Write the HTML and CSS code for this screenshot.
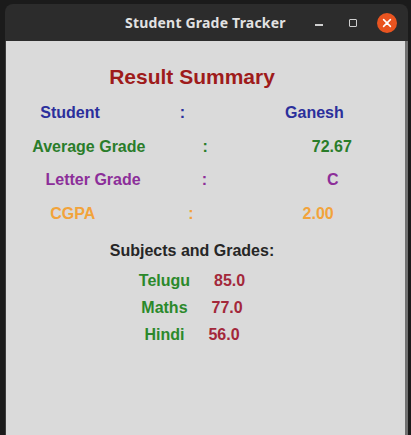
FILE: index.html
```html
<!DOCTYPE html>
<html lang="en">
<head>
<meta charset="utf-8">
<title>Student Grade Tracker</title>
<link rel="stylesheet" href="styles.css">
</head>
<body>
<div class="window">
  <header class="titlebar">
    <div class="title">Student Grade Tracker</div>
    <div class="controls">
      <span class="btn btn-min"></span>
      <span class="btn btn-max"></span>
      <span class="btn btn-close">
        <svg width="20" height="20" viewBox="0 0 20 20"><circle cx="10" cy="10" r="10" fill="#e95420"/><path d="M6.6 6.6 L13.4 13.4 M13.4 6.6 L6.6 13.4" stroke="#ffffff" stroke-width="1.6" stroke-linecap="round"/></svg>
      </span>
    </div>
  </header>
  <main class="content">
    <h1 class="heading">Result Summary</h1>
    <div class="row row-student"><span class="lbl">Student</span><span class="colon">:</span><span class="val">Ganesh</span></div>
    <div class="row row-avg"><span class="lbl">Average Grade</span><span class="colon">:</span><span class="val">72.67</span></div>
    <div class="row row-letter"><span class="lbl">Letter Grade</span><span class="colon">:</span><span class="val">C</span></div>
    <div class="row row-cgpa"><span class="lbl">CGPA</span><span class="colon">:</span><span class="val">2.00</span></div>
    <h2 class="subhead">Subjects and Grades:</h2>
    <div class="subj"><span class="sname">Telugu</span><span class="sgrade">85.0</span></div>
    <div class="subj"><span class="sname">Maths</span><span class="sgrade">77.0</span></div>
    <div class="subj"><span class="sname">Hindi</span><span class="sgrade">56.0</span></div>
  </main>
</div>
</body>
</html>
```
FILE: styles.css
```css
html, body {
  margin: 0;
  padding: 0;
  height: 100%;
  overflow: hidden;
}
body {
  background: #1b1b1b;
  font-family: "Liberation Sans", Arial, sans-serif;
}
.window {
  margin: 4px 0 0 5px;
  width: 403px;
  height: 440px;
  border-radius: 8px 8px 0 0;
  overflow: hidden;
  display: flex;
  flex-direction: column;
}
.titlebar {
  height: 37px;
  flex: none;
  background: #2c2c2c;
  display: flex;
  align-items: center;
  position: relative;
}
.title {
  font-family: "Noto Sans", "DejaVu Sans", sans-serif;
  font-weight: 700;
  font-size: 14px;
  color: #e2e2e2;
  margin-left: 120px;
  letter-spacing: 0.2px;
}
.controls {
  margin-left: auto;
  display: flex;
  align-items: center;
  margin-right: 11px;
}
.btn {
  display: block;
}
.btn-min {
  width: 8px;
  height: 2px;
  background: #cfcfcf;
  margin-top: 5px;
  margin-right: 26px;
}
.btn-max {
  width: 6px;
  height: 6px;
  border: 1.5px solid #cfcfcf;
  border-radius: 1px;
  margin-right: 20px;
}
.btn-close {
  width: 20px;
  height: 20px;
}
.btn-close svg { display: block; }

.content {
  flex: 1;
  background: #dadada;
  border-left: 1px solid #3c3c3c;
  border-right: 3px solid #707070;
  padding: 22px 27px 0 0;
  display: flex;
  flex-direction: column;
  align-items: center;
  font-weight: 700;
  font-size: 16px;
}
.heading {
  margin: 0 0 5px 0;
  font-size: 21px;
  line-height: 28px;
  color: #9e1b1b;
  font-weight: 700;
}
.row {
  display: flex;
  line-height: 33.5px;
  height: 33.5px;
  white-space: nowrap;
}
.row-student { color: #2b2f9c; }
.row-student .colon { margin: 0 100px 0 80px; }
.row-avg { color: #2a7d2a; }
.row-avg .colon { margin: 0 104px 0 57px; }
.row-letter { color: #8c2e99; }
.row-letter .colon { margin: 0 120px 0 61px; }
.row-cgpa { color: #f2a33a; }
.row-cgpa .colon { margin: 0 109px 0 93px; }
.subhead {
  margin: 9px 0 4px 0;
  font-size: 16px;
  line-height: 24px;
  color: #262626;
  font-weight: 700;
}
.subj {
  display: flex;
  gap: 24px;
  line-height: 27px;
  height: 27px;
}
.sname { color: #2b892b; }
.sgrade { color: #a3283a; }
```
